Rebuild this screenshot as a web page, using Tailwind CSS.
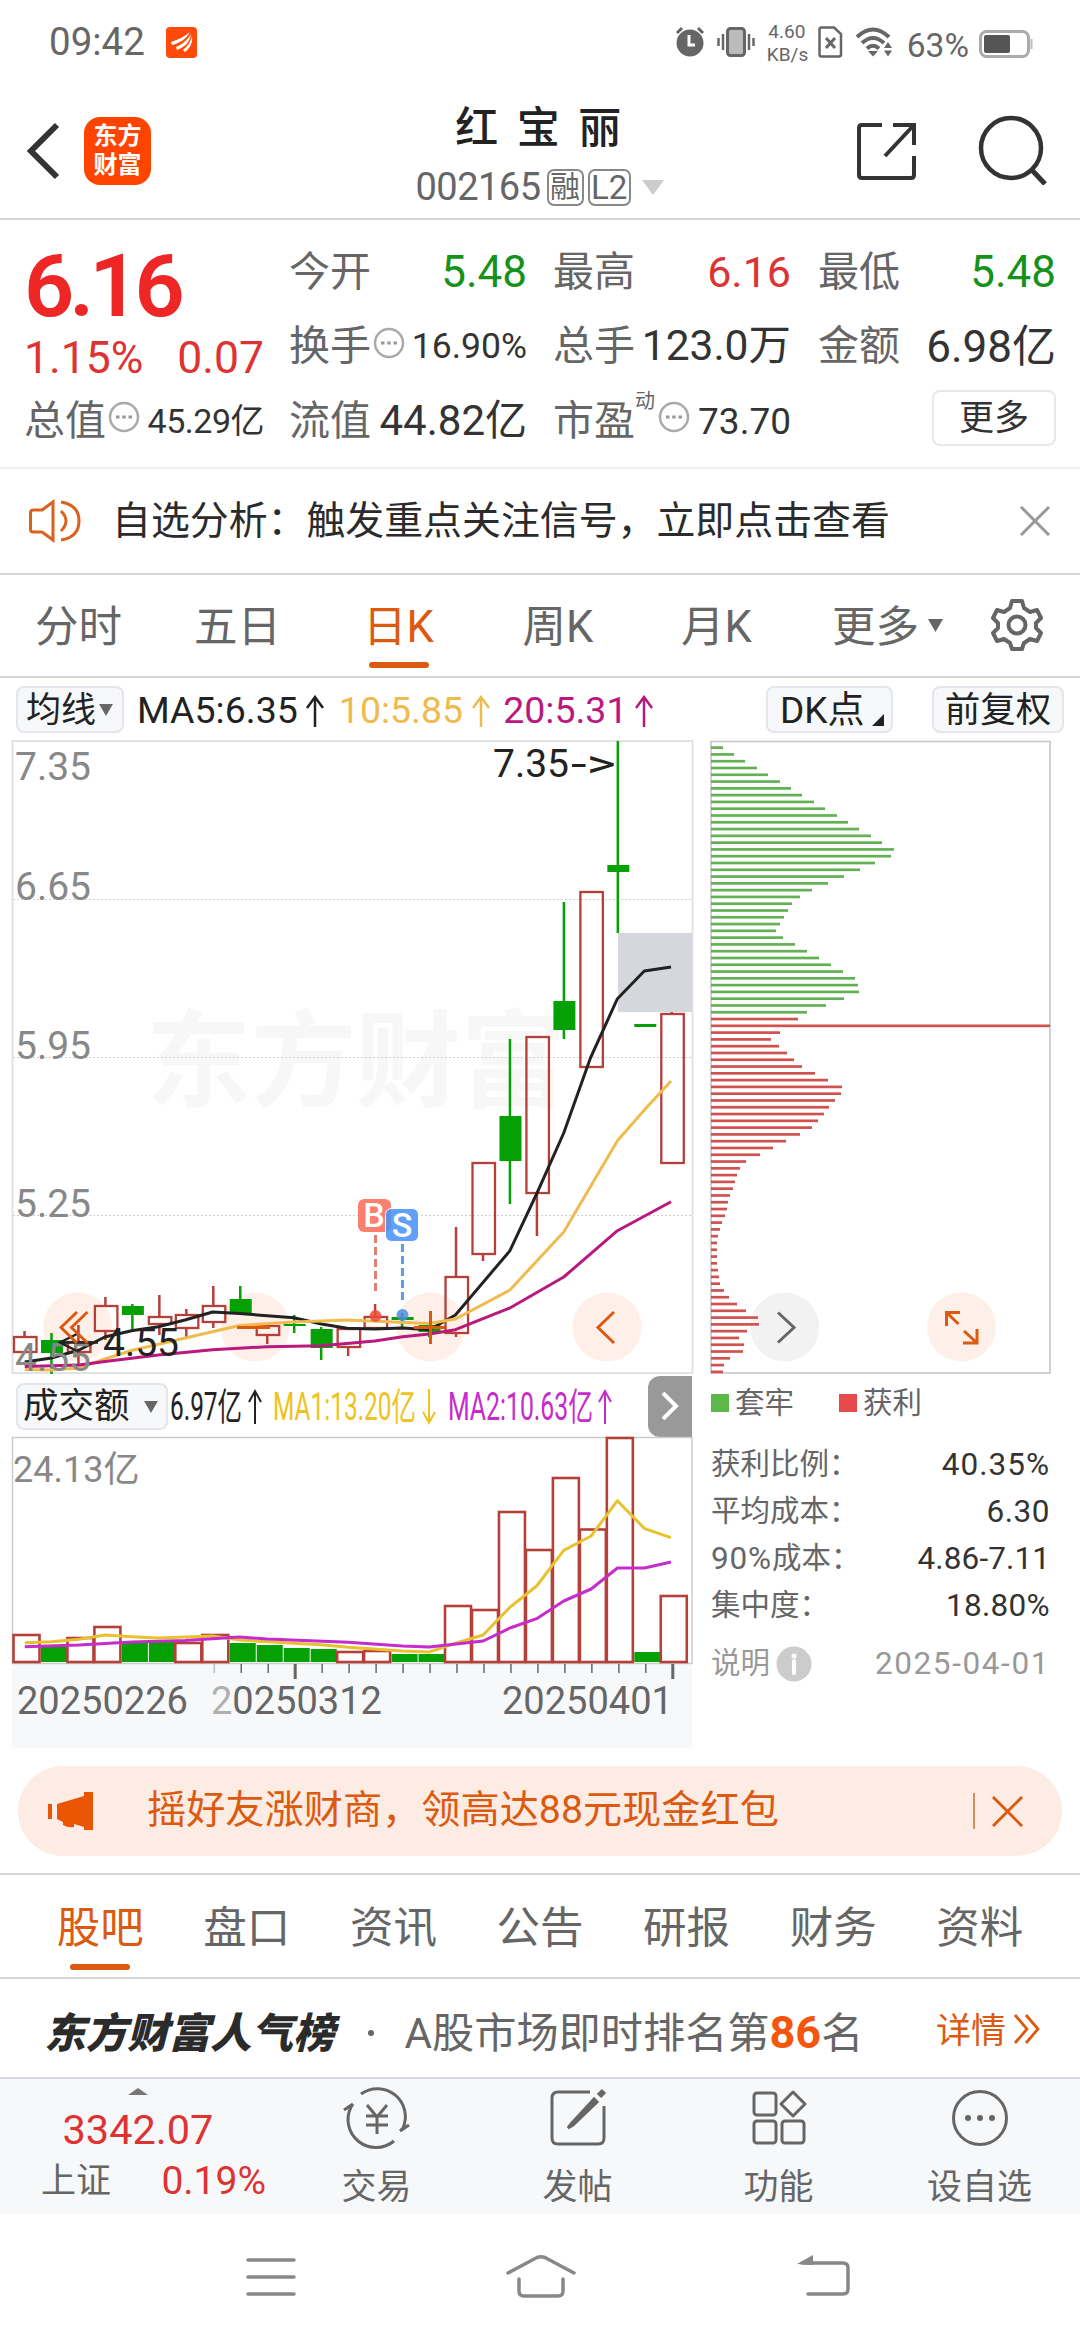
<!DOCTYPE html>
<html lang="zh-CN">

<head>
    <meta charset="UTF-8">
    <title>红宝丽 002165</title>
    <script src="https://cdn.jsdelivr.net/npm/@tailwindcss/browser@4"></script>
</head>

<body class="bg-white">
    <div class="w-[1080px] h-[2340px] overflow-hidden flex flex-col bg-white text-[#333] font-['Roboto','Noto_Sans_CJK_SC',sans-serif] leading-none whitespace-nowrap">

        <!-- status bar -->
        <div class="h-[84px] shrink-0 flex items-center pl-[49px] pr-[47px] text-[#666]">
            <span class="text-[38.500px]">09:42</span>
            <svg class="w-[31px] h-[31px] ml-[21px]" viewBox="0 0 31 31">
                <rect width="31" height="31" rx="4" fill="#ff4a0a" />
                <path d="M5 15C11 13 18 10 24 5C20 12 14 16 6 18ZM10 20C17 17 22 12 25 7C24 15 19 20 11 23ZM17 23C22 19 25 14 26 9C27 16 24 21 19 25Z" fill="#fff" />
            </svg>
            <div class="ml-auto flex items-center">
                <svg class="w-[30px] h-[32px]" viewBox="0 0 30 32">
                    <circle cx="15" cy="17" r="13.5" fill="#666" />
                    <path d="M2 7L7 2M28 7L23 2" stroke="#666" stroke-width="3" />
                    <path d="M14 9V19H20" stroke="#fff" stroke-width="3" fill="none" />
                </svg>
                <svg class="w-[38px] h-[32px] ml-3" viewBox="0 0 38 32">
                    <rect x="10.5" y="2.5" width="17" height="27" rx="3" fill="#bbb" stroke="#666" stroke-width="3" />
                    <path d="M6 8V24M32 8V24M1.500 12V20M36.500 12V20" stroke="#666" stroke-width="2.500" />
                </svg>
                <div class="ml-3 w-[40px] text-[19px] leading-[23px] text-center mt-[2px]">4.60<br>KB/s</div>
                <svg class="w-[25px] h-[32px] ml-[11px]" viewBox="0 0 25 32">
                    <path d="M3.500 1.500H16L23 8V28.500Q23 30.500 21 30.500H3.500Q1.500 30.500 1.500 28.500V3.500Q1.500 1.500 3.500 1.500Z" fill="none" stroke="#666" stroke-width="2.500" />
                    <path d="M8 12L17 22M17 12L8 22" stroke="#666" stroke-width="3" />
                </svg>
                <svg class="w-[38px] h-[30px] ml-[12px]" viewBox="0 0 38 30">
                    <path d="M2 10Q18 -5 34 10M7 16Q18 6 29 16M12 21.500Q18 16 24 21.500" fill="none" stroke="#666" stroke-width="4" />
                    <path d="M13 24H23L18 29.500ZM29 21L33 15L37 21ZM29 23.500H37L33 29.500Z" fill="#666" />
                </svg>
                <span class="text-[33.500px] ml-[14px] mt-[8px]">63%</span>
                <svg class="w-[54px] h-[28px] ml-[10px] mt-[3px]" viewBox="0 0 54 28">
                    <rect x="1.500" y="1.500" width="48" height="25" rx="6" fill="none" stroke="#aaa" stroke-width="3" />
                    <rect x="5" y="5" width="26" height="18" rx="2" fill="#555" />
                    <path d="M52.500 9V19" stroke="#bbb" stroke-width="2" />
                </svg>
            </div>
        </div>

        <!-- header -->
        <div class="h-[136px] shrink-0 flex items-start justify-between border-b-2 border-[#d8d8d8] pl-[26px] pr-[31px]">
            <div class="flex items-center w-[196px] pt-[33px]">
                <svg class="w-[34px] h-[58px]" viewBox="0 0 34 58">
                    <path d="M31 3L5 29L31 55" fill="none" stroke="#333" stroke-width="6" />
                </svg>
                <div class="ml-[24px] w-[67px] h-[68px] rounded-[16px] bg-[#ff4400] text-white font-bold text-[24px] leading-[29px] text-center pt-[5px]">东方<br>财富</div>
            </div>
            <div class="flex flex-col items-center pt-[23px]">
                <div class="text-[43px] font-medium text-[#222] tracking-[18.500px] pl-[16px]">红宝丽</div>
                <div class="flex items-center mt-[18px] text-[#666]">
                    <span class="text-[38px] tracking-[-0.500px]">002165</span>
                    <span class="ml-[6px] w-[37px] h-[37px] rounded-[7px] border-2 border-[#888] text-[30px] leading-[32px] text-center">融</span>
                    <span class="ml-[4px] w-[43px] h-[37px] rounded-[7px] border-2 border-[#888] text-[33px] leading-[34px] text-center">L2</span>
                    <svg class="w-[22px] h-[15px] ml-[11px]" viewBox="0 0 22 15"><path d="M0 0H22L11 15Z" fill="#ccc" /></svg>
                </div>
            </div>
            <div class="flex items-center w-[192px] pt-[32px]">
                <svg class="w-[60px] h-[60px]" viewBox="0 0 60 60">
                    <path d="M25 4H5Q2 4 2 7V54Q2 57 5 57H54Q57 57 57 54V35M36 4H57V24M56 5L28 35" fill="none" stroke="#333" stroke-width="4" />
                </svg>
                <svg class="w-[70px] h-[70px] ml-[61px] -mt-[1px]" viewBox="0 0 70 70">
                    <circle cx="33" cy="33" r="30" fill="none" stroke="#333" stroke-width="4.500" />
                    <path d="M53 54L67 69" stroke="#333" stroke-width="5" />
                </svg>
            </div>
        </div>

        <!-- quote -->
        <div class="h-[249px] shrink-0 border-b-2 border-[#eee] flex pl-[24px] text-[41px] text-[#666]">
            <div class="w-[240px]">
                <div class="h-[113px] pt-[22px] text-[88px] font-semibold text-[#ee2626] tracking-[-5px]">6.16</div>
                <div class="h-[50px] flex items-center justify-between text-[44.500px] text-[#dd3333]"><span>1.15%</span><span>0.07</span></div>
                <div class="h-[76px] flex items-center"><span>总值</span>
                    <svg class="w-[32px] h-[32px] ml-[2px] -mt-2" viewBox="0 0 32 32"><use href="#more" /></svg>
                    <span class="text-[34px] text-[#333] ml-auto tracking-[-0.500px]">45.29亿</span>
                </div>
            </div>
            <div class="ml-[25px] w-[238px] pt-[15px]">
                <div class="h-[74px] flex items-center justify-between">今开<span class="text-[44px] text-[#14921a]">5.48</span></div>
                <div class="h-[75px] flex items-center">换手
                    <svg class="w-[32px] h-[32px] ml-[2px] -mt-2" viewBox="0 0 32 32"><use href="#more" /></svg>
                    <span class="text-[35.500px] text-[#333] ml-auto">16.90%</span>
                </div>
                <div class="h-[74px] flex items-center justify-between">流值<span class="text-[42px] text-[#333]">44.82亿</span></div>
            </div>
            <div class="ml-[26px] w-[238px] pt-[15px]">
                <div class="h-[74px] flex items-center justify-between">最高<span class="text-[43px] text-[#dd3333]">6.16</span></div>
                <div class="h-[75px] flex items-center justify-between">总手<span class="text-[42.500px] text-[#333]">123.0万</span></div>
                <div class="h-[74px] flex items-center">市盈<span class="text-[20px] -mt-10">动</span>
                    <svg class="w-[32px] h-[32px] ml-[3px] -mt-2" viewBox="0 0 32 32"><use href="#more" /></svg>
                    <span class="text-[37px] text-[#333] ml-auto">73.70</span>
                </div>
            </div>
            <div class="ml-[27px] w-[238px] pt-[15px]">
                <div class="h-[74px] flex items-center justify-between">最低<span class="text-[44px] text-[#14921a]">5.48</span></div>
                <div class="h-[75px] flex items-center justify-between">金额<span class="text-[44px] text-[#333]">6.98亿</span></div>
                <div class="h-[68px] flex items-center justify-end">
                    <span class="w-[124px] h-[56px] rounded-[8px] border-2 border-[#e8e8e8] text-[35px] leading-[53px] text-center text-[#333]">更多</span>
                </div>
            </div>
            <svg class="hidden"><g id="more"><circle cx="16" cy="16" r="14" fill="none" stroke="#aaa" stroke-width="2.500" /><path d="M8 16h3.500M14.200 16h3.500M20.500 16h3.500" stroke="#999" stroke-width="3" /></g></svg>
        </div>

        <!-- notice -->
        <div class="h-[106px] shrink-0 border-b-2 border-[#d8d8d8] flex items-center pl-[28px] pr-[30px]">
            <svg class="w-[54px] h-[44px]" viewBox="0 0 54 44" fill="none" stroke="#d9621e" stroke-width="3">
                <path d="M25 3L14 11H5Q2.500 11 2.500 14V30Q2.500 33 5 33H14L25 41ZM33 12Q43 22 33 32M33 3Q51 6 51 22T33 41" />
            </svg>
            <span class="ml-[30px] text-[38.900px] text-[#2b2b2b]">自选分析：触发重点关注信号，立即点击查看</span>
            <svg class="w-[30px] h-[30px] ml-auto" viewBox="0 0 30 30"><path d="M1 1L29 29M29 1L1 29" stroke="#999" stroke-width="3" /></svg>
        </div>

        <!-- period tabs -->
        <div class="h-[103px] shrink-0 border-b-2 border-[#d8d8d8] flex items-center text-[43.500px] text-[#666]">
            <div class="w-[157px] text-center pt-[4px]">分时</div>
            <div class="w-[161px] text-center pt-[4px]">五日</div>
            <div class="w-[161px] h-full flex flex-col items-center text-[#dc5a10]">
                <span class="mt-[31px]">日K</span><span class="mt-[12px] w-[60px] h-[6px] rounded-full bg-[#dc5a10]"></span>
            </div>
            <div class="w-[158px] text-center pt-[4px]">周K</div>
            <div class="w-[159px] text-center pt-[4px]">月K</div>
            <div class="ml-[36px] flex items-center pt-[4px]">更多
                <svg class="w-[15px] h-[13px] ml-[9px] -mt-[4px]" viewBox="0 0 15 13"><path d="M0 0H15L7.500 13Z" fill="#666" /></svg>
            </div>
            <svg class="w-[52px] h-[54px] ml-[48px] -mt-[2px]" viewBox="0 0 52 54" fill="none" stroke="#666" stroke-width="4">
                <path d="M21 3H31L33 10L39 14L46 12L50 20L45 25V30L50 35L46 43L39 41L33 45L31 51H21L19 45L13 41L6 43L2 35L7 30V25L2 20L6 12L13 14L19 10Z" stroke-linejoin="round" />
                <circle cx="26" cy="27" r="8.500" />
            </svg>
        </div>

        <!-- indicator row -->
        <div class="h-[62px] shrink-0 flex items-center pl-[16px] pr-[16px] text-[37.500px]">
            <div class="w-[108px] h-[47px] rounded-[8px] border-2 border-[#e4e5ea] bg-[#f7f8fa] flex items-center pl-[8px] pt-[2px] text-[35px] text-[#222]">均线
                <svg class="w-[14px] h-[12px] ml-[3px]" viewBox="0 0 15 13"><path d="M0 0H15L7.500 13Z" fill="#666" /></svg>
            </div>
            <span class="ml-[13px] pt-[3px] text-[#222]">MA5:6.35</span>
            <svg class="w-[18px] h-[32px] ml-[8px] mt-1" viewBox="0 0 18 32" fill="none" stroke="#222" stroke-width="2.500"><path d="M9 32V2M1 13L9 2L17 13" /></svg>
            <span class="ml-[15px] pt-[3px] text-[#f0bb4e]">10:5.85</span>
            <svg class="w-[18px] h-[32px] ml-[9px] mt-1" viewBox="0 0 18 32" fill="none" stroke="#f0bb4e" stroke-width="2.500"><path d="M9 32V2M1 13L9 2L17 13" /></svg>
            <span class="ml-[13px] pt-[3px] text-[#b9187c]">20:5.31</span>
            <svg class="w-[18px] h-[32px] ml-[7px] mt-1" viewBox="0 0 18 32" fill="none" stroke="#b9187c" stroke-width="2.500"><path d="M9 32V2M1 13L9 2L17 13" /></svg>
            <div class="ml-auto w-[127px] h-[47px] rounded-[8px] border-2 border-[#e4e5ea] bg-[#f7f8fa] flex items-center pl-[12px] pt-[2px] text-[37px] text-[#222]">DK点
                <svg class="w-[12px] h-[12px] ml-[7px] mt-5" viewBox="0 0 12 12"><path d="M12 0V12H0Z" fill="#222" /></svg>
            </div>
            <div class="ml-[39px] w-[132px] h-[47px] rounded-[8px] border-2 border-[#e4e5ea] bg-[#f7f8fa] text-[35.500px] leading-[45px] text-center text-[#222]">前复权</div>
        </div>

        <!-- charts -->
        <div class="h-[1026px] shrink-0 flex">
            <div class="w-[700px]">
                <svg id="kline" class="block w-[700px] h-[636px] overflow-visible" viewBox="0 740 700 636" fill="none"></svg>
                <div class="h-[60px] flex items-center pl-[16px] pr-[8px]">
                    <div class="w-[152px] h-[47px] rounded-[8px] border-2 border-[#e4e5ea] bg-[#f7f8fa] flex items-center pl-[5px] pt-[2px] text-[35.500px] text-[#222]">成交额
                        <svg class="w-[14px] h-[12px] ml-[14px]" viewBox="0 0 15 13"><path d="M0 0H15L7.500 13Z" fill="#666" /></svg>
                    </div>
                    <svg class="w-[450px] h-[50px] ml-[3px] overflow-visible" viewBox="171 1380 450 50" font-size="38">
                        <text x="170" y="1419" textLength="72" lengthAdjust="spacingAndGlyphs" fill="#222">6.97亿</text>
                        <text x="273" y="1419" textLength="143" lengthAdjust="spacingAndGlyphs" fill="#efc220">MA1:13.20亿</text>
                        <text x="448" y="1419" textLength="145" lengthAdjust="spacingAndGlyphs" fill="#c52ccb">MA2:10.63亿</text>
                        <g fill="none" stroke-width="2">
                            <path d="M255 1423V1390M249 1401L255 1390L261 1401" stroke="#222" />
                            <path d="M429 1388V1421M423 1411L429 1422L435 1411" stroke="#efc220" />
                            <path d="M605 1423V1390M599 1401L605 1390L611 1401" stroke="#c52ccb" />
                        </g>
                    </svg>
                    <div class="ml-auto w-[44px] h-[61px] rounded-l-[12px] bg-[#999] flex items-center justify-center">
                        <svg class="w-[18px] h-[28px]" viewBox="0 0 18 28"><path d="M2 1L15 14L2 27" fill="none" stroke="#fff" stroke-width="4" /></svg>
                    </div>
                </div>
                <svg id="volume" class="block w-[700px] h-[312px]" viewBox="0 1436 700 312" fill="none"></svg>
            </div>

            <div class="w-[380px] text-[29.500px] text-[#666]">
                <svg id="chips" class="block w-[380px] h-[636px]" viewBox="700 740 380 636" fill="none"></svg>
                <div class="h-[54px] pl-[11px] flex items-center">
                    <span class="w-[18px] h-[18px] bg-[#5cb848]"></span><span class="ml-[6px] pt-[2px]">套牢</span>
                    <span class="ml-[45px] w-[18px] h-[18px] bg-[#e8494a]"></span><span class="ml-[6px] pt-[2px]">获利</span>
                </div>
                <div class="pl-[11px] pr-[30px] pt-[11px]">
                    <div class="h-[47px] flex items-center justify-between">获利比例：<span class="text-[31.500px] tracking-[1px] text-[#333]">40.35%</span></div>
                    <div class="h-[47px] flex items-center justify-between">平均成本：<span class="text-[31.500px] tracking-[0.500px] text-[#333]">6.30</span></div>
                    <div class="h-[47px] flex items-center justify-between"><span class="flex items-center"><span class="text-[31.500px] tracking-[0.800px]">90%</span>成本：</span><span class="text-[31.500px] tracking-[0.100px] text-[#333]">4.86-7.11</span></div>
                    <div class="h-[47px] flex items-center justify-between">集中度：<span class="text-[31.500px] tracking-[0.300px] text-[#333]">18.80%</span></div>
                    <div class="h-[70px] flex items-center text-[#999]">说明
                        <svg class="w-[36px] h-[36px] ml-[6px]" viewBox="0 0 36 36"><circle cx="18" cy="18" r="17.500" fill="#ccc" /><path d="M18 15V27" stroke="#fff" stroke-width="4" stroke-linecap="round" /><circle cx="18" cy="10" r="2.500" fill="#fff" /></svg>
                        <span class="ml-auto text-[31.500px] tracking-[1.600px]">2025-04-01</span>
                    </div>
                </div>
            </div>
        </div>

        <!-- banner -->
        <div class="h-[109px] shrink-0 border-b-2 border-[#d8d8d8] px-[18px]">
            <div class="h-[90px] rounded-full bg-[#fdece3] flex items-center pl-[30px] pr-[39px] text-[#dc5a10]">
                <svg class="w-[46px] h-[40px]" viewBox="0 0 46 40" fill="#ea5504"><path d="M0 13H4V28H0ZM9 13L36 5V1H45V39H36V36L26 33V36Q20 37 15 34V31L9 28Z" /></svg>
                <span class="ml-[53px] text-[39.200px]">摇好友涨财商，领高达88元现金红包</span>
                <span class="ml-auto w-[2px] h-[36px] bg-[#d98a60]"></span>
                <svg class="w-[31px] h-[31px] ml-[17px]" viewBox="0 0 31 31"><path d="M1 1L30 30M30 1L1 30" stroke="#dc5a10" stroke-width="3" /></svg>
            </div>
        </div>

        <!-- section tabs -->
        <div class="h-[104px] shrink-0 border-b-2 border-[#d8d8d8] flex px-[27px] text-[43.500px] text-[#666] text-center pt-[32px]">
            <div class="flex-1 flex flex-col items-center text-[#dc5a10]">股吧<span class="mt-[13px] w-[60px] h-[6px] rounded-full bg-[#dc5a10]"></span></div>
            <div class="flex-1">盘口</div>
            <div class="flex-1">资讯</div>
            <div class="flex-1">公告</div>
            <div class="flex-1">研报</div>
            <div class="flex-1">财务</div>
            <div class="flex-1">资料</div>
        </div>

        <!-- popularity rank -->
        <div class="h-[100px] shrink-0 border-b-2 border-[#d5d8dc] flex items-center pl-[44px] pr-[39px] pt-[10px] text-[42.200px] text-[#666]">
            <span class="font-black italic text-[41.500px] text-[#2b2b2b] pt-[2px]">东方财富人气榜</span>
            <span class="ml-[33px] w-[6px] h-[6px] rounded-full bg-[#666]"></span>
            <span class="ml-[31px]">A股市场即时排名第<b class="text-[#f4560c] text-[45px]">86</b>名</span>
            <span class="ml-auto text-[35px] text-[#dc5a10] -mt-[4px]">详情</span>
            <svg class="w-[28px] h-[30px] ml-[7px] -mt-[8px]" viewBox="0 0 28 30"><path d="M2 1L14 15L2 29M13 1L25 15L13 29" fill="none" stroke="#dc5a10" stroke-width="2.800" /></svg>
        </div>

        <!-- bottom bar -->
        <div class="h-[135px] shrink-0 bg-[#f7f8fa] flex text-[35px] text-[#666]">
            <div class="w-[276px] flex flex-col items-center">
                <svg class="w-[20px] h-[7px] mt-[9px]" viewBox="0 0 20 7"><path d="M10 0L20 7H0Z" fill="#777" /></svg>
                <div class="mt-[14px] text-[41.500px] text-[#dd3333]">3342.07</div>
                <div class="mt-[11px] w-full flex items-center justify-between pl-[41px] pr-[10px]">上证<span class="text-[39px] text-[#dd3333]">0.19%</span></div>
            </div>
            <div class="flex-1 flex flex-col items-center pt-[9px]">
                <svg class="w-[68px] h-[60px] overflow-visible" viewBox="0 0 68 60" fill="none" stroke="#666" stroke-width="3">
                    <path d="M18 6A28 28 0 0 1 60 40L57 43M57 43L66 37M51 53A28 28 0 0 1 8 19L10 16M10 16L1 22" />
                    <path d="M24 17L34 29L44 17M34 29V46M23 28H45M23 37H45" />
                </svg>
                <span class="mt-[22px]">交易</span>
            </div>
            <div class="flex-1 flex flex-col items-center pt-[9px]">
                <svg class="w-[60px] h-[60px]" viewBox="0 0 60 60" fill="none" stroke="#666" stroke-width="3">
                    <path d="M42 4H10Q4 4 4 10V50Q4 56 10 56H50Q56 56 56 50V18" />
                    <path d="M46 11L23 36L20 40L25 37L49 14Z" fill="#666" />
                    <path d="M51 8L56 3" stroke-width="6" />
                </svg>
                <span class="mt-[22px]">发帖</span>
            </div>
            <div class="flex-1 flex flex-col items-center pt-[9px]">
                <svg class="w-[56px] h-[60px]" viewBox="0 0 56 60" fill="none" stroke="#666" stroke-width="3">
                    <rect x="3" y="5" width="22" height="22" rx="3" /><rect x="3" y="33" width="22" height="22" rx="3" /><rect x="31" y="33" width="22" height="22" rx="3" />
                    <path d="M42 4L54 16L42 28L30 16Z" stroke-linejoin="round" />
                </svg>
                <span class="mt-[22px]">功能</span>
            </div>
            <div class="flex-1 flex flex-col items-center pt-[9px]">
                <svg class="w-[60px] h-[60px]" viewBox="0 0 60 60"><circle cx="30" cy="30" r="26.500" fill="none" stroke="#666" stroke-width="3" /><g fill="#666"><circle cx="18" cy="30" r="3" /><circle cx="30" cy="30" r="3" /><circle cx="42" cy="30" r="3" /></g></svg>
                <span class="mt-[22px]">设自选</span>
            </div>
        </div>

        <!-- system navigation -->
        <div class="flex-1 flex justify-between pl-[245px] pr-[229px] pt-[40px]">
            <svg class="w-[52px] h-[46px]" viewBox="0 0 52 46"><path d="M3 6H49M3 23H49M3 40H49" stroke="#888" stroke-width="3.500" stroke-linecap="round" /></svg>
            <svg class="w-[72px] h-[46px] ml-[-12px]" viewBox="0 0 72 46" fill="none" stroke="#888" stroke-width="3.500" stroke-linecap="round"><path d="M3 19L32 3.500Q36 2 40 3.500L69 19M14 25V37Q14 42 19 42H53Q58 42 58 37V25" /></svg>
            <svg class="w-[54px] h-[46px]" viewBox="0 0 54 46"><path d="M5 9H46Q51 9 51 14V35Q51 40 46 40H11" fill="none" stroke="#888" stroke-width="3.500" stroke-linecap="round" /><path d="M0 10L16 1V11Z" fill="#888" /></svg>
        </div>
    </div>

    <script>
        const RED = '#b5403a', GREEN = '#04a004';
        const cx = i => 24.5 + 26.97 * i;
        // [up, body top, body bottom, wick top, wick bottom]
        const candles = [
            [1, 1337, 1352, 1331, 1352], [0, 1340, 1353, 1333, 1374], [1, 1342, 1352, 1325, 1365],
            [1, 1306, 1331, 1297, 1340], [0, 1306, 1315, 1304, 1330], [1, 1317, 1324, 1295, 1335],
            [1, 1315, 1328, 1309, 1337], [1, 1306, 1322, 1286, 1328], [0, 1299, 1313, 1286, 1313],
            [1, 1326, 1335, 1326, 1344], [0, 1324, 1326, 1315, 1333], [0, 1329, 1348, 1327, 1360],
            [1, 1329, 1347, 1327, 1356], [1, 1317, 1328, 1304, 1328], [0, 1317, 1320, 1313, 1328],
            [0, 1325, 1332, 1325, 1337], [1, 1277, 1333, 1227, 1337], [1, 1163, 1254, 1163, 1261],
            [0, 1116, 1161, 1039, 1204], [1, 1037, 1193, 1037, 1236], [0, 1001, 1030, 902, 1039],
            [1, 892, 1067, 892, 1067], [0, 865, 872, 741, 933], [0, 1024, 1027, 1024, 1027],
            [1, 1014, 1163, 1012, 1163]
        ];
        let k = `<g fill="#fef0e8"><circle cx="77.5" cy="1327" r="34.500"/><circle cx="255" cy="1327" r="34.500"/><circle cx="430.5" cy="1327" r="34.500"/><circle cx="607" cy="1327" r="34.500"/></g>
            <text x="146" y="1098" font-size="105" font-weight="bold" fill="#f7f7f7">东方财富</text>
            <rect x="12.5" y="741" width="680" height="632" stroke="#e2e2e4" stroke-width="2"/>
            <path d="M13 899.500H692M13 1057.500H692M13 1215.500H692" stroke="#d0d0d0" stroke-dasharray="2 2"/>
            <rect x="618" y="933" width="74" height="79" fill="#d4d7dc"/>`;
        candles.forEach(function (c, i) {
            const x = cx(i), col = c[0] ? RED : GREEN;
            k += `<path d="M${x} ${c[3]}V${c[1]}M${x} ${c[2]}V${c[4]}" stroke="${col}" stroke-width="2.500"/>`;
            k += c[0] ? `<rect x="${x - 10.5}" y="${c[1]}" width="22.500" height="${c[2] - c[1]}" stroke="${RED}" stroke-width="2.300"/>`
                : `<rect x="${x - 10.5}" y="${c[1]}" width="22" height="${c[2] - c[1]}" fill="${GREEN}"/>`;
        });
        k += `<g stroke-width="3" stroke-linejoin="round" transform="scale(.989 1)">
            <path stroke="#222" d="M25 1362L52 1358L80 1350L106 1337L133 1330.700L160 1326.700L187 1320L215 1312L242 1313.500L297 1317.700L325 1324L351 1328.300L379 1329L407 1328L434 1329.700L460.500 1315L515.600 1250.700L543 1193L570 1133L597 1058L624.300 998.700L651.500 971L678.500 967"/>
            <path stroke="#f0bb4e" d="M25 1369.500L52 1370L80 1368L106 1359L133 1350.500L242 1325.500L297 1322L351 1320L434 1323.500L460.500 1319L515.600 1290L570 1232L624.300 1140.700L651.500 1110L678.500 1081"/>
            <path stroke="#b9187c" d="M25 1366.500L80 1365L106 1361.500L160 1355L215 1349.700L270 1346.700L325 1345.700L379 1341L407 1336.700L434 1334L460.500 1329.700L515.600 1308L570 1277L624.300 1230.700L678.500 1201.700"/></g>
            <g font-size="39" fill="#888"><text x="15" y="780">7.35</text><text x="15" y="900">6.65</text><text x="15" y="1059">5.95</text><text x="15" y="1217">5.25</text><text x="15" y="1371">4.55</text></g>
            <g font-size="39" fill="#222"><text x="493" y="777">7.35</text><text x="571" y="777" textLength="45" lengthAdjust="spacingAndGlyphs">-&gt;</text><text x="103" y="1356">4.55</text></g>
            <path d="M77 1334L60 1342.500L77 1351M60 1342.500H98" stroke="#222" stroke-width="2.500"/>
            <g stroke="#dc5a10" stroke-width="3"><path d="M77 1312L61 1327.500L77 1343M87.500 1312L71.500 1327.500L87.500 1343M237 1327.500H270M414 1327.500H445M430.500 1311V1344M614 1312L598 1327.500L614 1343"/></g>
            <path d="M375.500 1235V1292" stroke="#e08074" stroke-width="3" stroke-dasharray="8 4"/>
            <path d="M402.500 1244V1300" stroke="#5a9de8" stroke-width="3" stroke-dasharray="8 4"/>
            <circle cx="375.500" cy="1316" r="6" fill="#f04a3a" fill-opacity=".85"/><circle cx="402.500" cy="1315" r="6" fill="#4a8de0" fill-opacity=".85"/>
            <rect x="358" y="1199" width="33" height="33" rx="6" fill="#f97f6f"/>
            <text x="374" y="1227" font-size="34" font-weight="500" fill="#fff" text-anchor="middle">B</text>
            <rect x="385.500" y="1208.500" width="33" height="33" rx="6" fill="#4a93f7" fill-opacity=".88" stroke="#fff"/>
            <text x="402" y="1237" font-size="34" font-weight="500" fill="#fff" text-anchor="middle">S</text>`;
        document.getElementById('kline').innerHTML = k;

        // turnover bars, negative = down day
        const vols = [1635, -1647, 1638, 1627, -1642, -1642, 1643, 1635, -1643, -1645, -1648, -1649, 1652, 1651, -1654, -1654, 1606, 1610, 1512, 1550, 1478, 1529.5, 1438, -1652, 1596];
        let v = `<rect x="12" y="1664" width="680" height="84" fill="#f7f8fa"/><rect x="12.500" y="1437.500" width="679.500" height="226" stroke="#ccc" stroke-width="1.500"/>`;
        vols.forEach(function (y, i) {
            const x = cx(i) - 11.5;
            v += y < 0 ? `<rect x="${x + 1}" y="${-y}" width="26" height="${1662 + y}" fill="${GREEN}"/>`
                : `<rect x="${x + .5}" y="${y}" width="26" height="${1662 - y}" stroke="${RED}" stroke-width="2.600"/>`;
            if (i > 6) {
                const big = i === 10 || i === 24;
                v += `<path d="M${cx(i) + 1} 1664V${big ? 1679 : 1673}" stroke="${i === 7 ? '#bbb' : '#666'}" stroke-width="${big ? 3 : 1.5}"/>`;
            }
        });
        v += `<g stroke-width="3" stroke-linejoin="round" transform="scale(.989 1)"><path stroke="#e8c22e" d="M25 1642.700L52 1641.700L80 1639.300L106 1635L133 1636.700L160 1638L215 1636L242 1640L297 1643.300L325 1644.700L352 1647.300L407 1651L434 1652L460.500 1643.300L488.500 1635L515.600 1607.300L542.600 1586L570 1550.300L597.700 1536L624.300 1500.700L651.800 1528.700L678.400 1537.700"/>
            <path stroke="#c52ccb" d="M25 1646.700L80 1645L133 1642L187 1640.500L242 1637L270 1639L352 1642.300L407 1646L434 1647L488.500 1641L515.600 1628L542.600 1618.700L570 1601L597.700 1589L624.300 1568L651.800 1568L678.400 1562"/></g>
            <text x="13" y="1482" font-size="36" fill="#888">24.13亿</text>
            <g font-size="38" fill="#666"><text x="17" y="1714">20250226</text><text x="211" y="1714"><tspan fill="#b0b0b0">2</tspan>0250312</text><text x="502" y="1714">20250401</text></g>`;
        document.getElementById('volume').innerHTML = v;

        // cost distribution, first 40 rows are above the current price
        const chips = [12, 23, 34, 46, 57, 69, 80, 91, 103, 114, 126, 137, 148, 160, 171, 183, 180, 164, 149, 133, 117, 101, 89, 81, 77, 73, 69, 65, 72, 84, 96, 108, 120, 132, 144, 147, 148, 133, 115, 96,
            87, 339, 69, 60, 68, 76, 83, 91, 104, 117, 131, 130, 124, 118, 113, 107, 101, 89, 75, 62, 49, 35, 29, 26, 24, 22, 19, 17, 16, 14, 11, 9, 7, 6, 6, 6, 6, 7, 8, 9, 13, 18, 26, 35, 47, 48, 36, 28, 33, 32, 19, 13, 12];
        let c = `<rect x="711" y="741.500" width="339" height="631.500" stroke="#ccc" stroke-width="1.800"/><circle cx="784.7" cy="1327" r="34.500" fill="#f2f2f2"/><circle cx="961.500" cy="1327" r="34.500" fill="#fef0e8"/>`;
        chips.forEach(function (w, i) {
            c += `<rect x="711" y="${746.3 + i * 6.785}" width="${w}" height="2.700" fill="${i < 40 ? '#63b154' : '#cf5250'}"/>`;
        });
        c += `<path d="M778 1312.500L794 1327.500L778 1342.500" stroke="#666" stroke-width="3"/>
            <path d="M960 1312.500H946.500V1326M947 1313L958.500 1324M977 1329V1343H963M964 1331L976 1342" stroke="#dc5a10" stroke-width="3"/>`;
        document.getElementById('chips').innerHTML = c;
    </script>
</body>

</html>
